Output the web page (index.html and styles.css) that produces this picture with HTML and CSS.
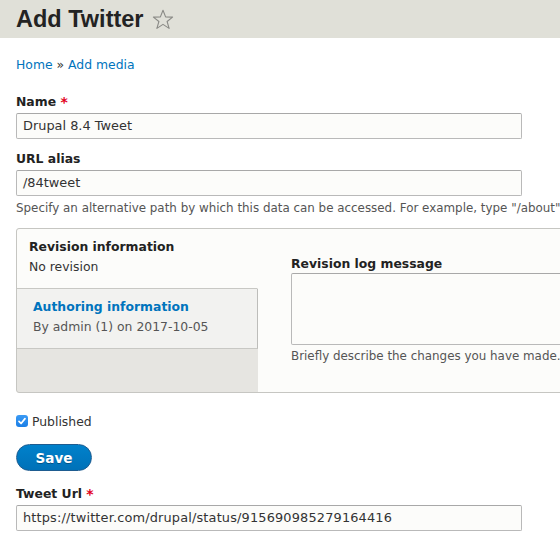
FILE: index.html
```html
<!DOCTYPE html>
<html lang="en">
<head>
<meta charset="utf-8">
<title>Add Twitter</title>
<link rel="stylesheet" href="styles.css">
</head>
<body>
<header class="page-header">
  <h1 class="page-title">Add Twitter</h1>
  <svg class="star" width="22" height="21" viewBox="0 0 22 21" aria-hidden="true">
    <path d="M11 1.2 L13.6 7.9 L20.6 8.1 L15.1 12.5 L17.1 19.4 L11 15.4 L4.9 19.4 L6.9 12.5 L1.4 8.1 L8.4 7.9 Z" fill="none" stroke="#8a8a86" stroke-width="1.1" stroke-linejoin="round"/>
  </svg>
</header>
<main class="content">
  <nav class="breadcrumb"><a href="#">Home</a> » <a href="#">Add media</a></nav>

  <div class="field first">
    <label class="label">Name <span class="req">*</span></label>
    <div class="input">Drupal 8.4 Tweet</div>
  </div>

  <div class="field">
    <label class="label">URL alias</label>
    <div class="input">/84tweet</div>
    <div class="desc nowrap">Specify an alternative path by which this data can be accessed. For example, type "/about"</div>
  </div>

  <div class="vtabs">
    <ul class="vtabs-menu">
      <li class="vtab selected">
        <strong class="vtab-title">Revision information</strong>
        <span class="vtab-summary">No revision</span>
      </li>
      <li class="vtab">
        <a href="#" class="vtab-title link">Authoring information</a>
        <span class="vtab-summary muted">By admin (1) on 2017-10-05</span>
      </li>
    </ul>
    <div class="vtabs-pane">
      <label class="label">Revision log message</label>
      <div class="textarea"></div>
      <div class="desc nowrap">Briefly describe the changes you have made.</div>
    </div>
  </div>

  <div class="check-row">
    <span class="checkbox">
      <svg width="12" height="12" viewBox="0 0 12 12" aria-hidden="true"><path d="M3 6.3 L5.1 8.5 L9 3.6" fill="none" stroke="#fff" stroke-width="1.7" stroke-linecap="round" stroke-linejoin="round"/></svg>
    </span>
    <span class="check-label">Published</span>
  </div>

  <button class="button">Save</button>

  <div class="field tweet">
    <label class="label">Tweet Url <span class="req">*</span></label>
    <div class="input url">https://twitter.com/drupal/status/915690985279164416</div>
  </div>
</main>
</body>
</html>
```

FILE: styles.css
```css
html { overflow: hidden; }
body {
  margin: 0;
  background: #fff;
  font-family: "DejaVu Sans", "Lucida Grande", sans-serif;
  font-size: 12.4px;
  color: #333;
}
a { color: #0074bd; text-decoration: none; }

.page-header {
  height: 38px;
  background: #e0e0d8;
  display: flex;
  align-items: center;
  padding-left: 16px;
  gap: 8px;
}
.page-title {
  margin: 0;
  font-family: "Liberation Sans", Arial, sans-serif;
  font-weight: bold;
  font-size: 23.5px;
  color: #232323;
  line-height: 38px;
}
.star { margin-top: 1px; }

.content { padding: 0 16px; }

.breadcrumb {
  margin-top: 18px;
  line-height: 18px;
}

.field.first { margin-top: 19px; }
.field { margin-top: 11px; }
.label {
  display: block;
  font-weight: bold;
  color: #222;
  line-height: 18px;
}
.req { color: #e2001b; font-size: 14px; vertical-align: top; }

.input {
  margin-top: 2px;
  width: 506px;
  height: 26px;
  box-sizing: border-box;
  border: 1px solid #b9b9b9;
  border-top-color: #a8a8a8;
  border-radius: 2px;
  background: #fcfcfa;
  padding: 0 6px;
  line-height: 24px;
  font-size: 12.9px;
  color: #333;
  white-space: nowrap;
}
.input.url { letter-spacing: 0.16px; }

.desc {
  margin-top: 4px;
  line-height: 16px;
  color: #555;
  font-size: 11.9px;
}
.nowrap { white-space: nowrap; }

.vtabs {
  margin-top: 12px;
  width: 720px;
  height: 163px;
  display: flex;
  border: 1px solid #c6c6c2;
  border-radius: 3px;
  background: #e6e5e1;
  box-sizing: content-box;
}
.vtabs-menu {
  list-style: none;
  margin: 0;
  padding: 0;
  width: 241px;
  flex: none;
}
.vtab {
  display: flex;
  flex-direction: column;
  height: 60px;
  box-sizing: border-box;
  border-bottom: 1px solid #c8c8c4;
  border-right: 1px solid #bdbdba;
  background: #f2f2f0;
  padding: 8px 16px 0;
  line-height: 20px;
}
.vtab.selected {
  background: #fcfcfa;
  border-right-color: #fcfcfa;
  padding: 8px 12px 0;
  border-top-left-radius: 3px;
}
.vtab-title { font-weight: bold; color: #222; }
.vtab-title.link { color: #0074bd; }
.vtab-summary { color: #333; }
.vtab-summary.muted { color: #555; }

.vtabs-pane {
  flex: 1;
  background: #fcfcfa;
  padding: 26px 0 0 33px;
}
.textarea {
  width: 400px;
  height: 72px;
  box-sizing: border-box;
  border: 1px solid #b9b9b9;
  border-top-color: #a8a8a8;
  border-radius: 2px;
  background: #fcfcfa;
}
.vtabs-pane .desc { margin-top: 3px; }

.check-row {
  margin-top: 20px;
  display: flex;
  align-items: center;
  gap: 4px;
  height: 16px;
}
.checkbox {
  width: 12px;
  height: 12px;
  border-radius: 3px;
  background: linear-gradient(#3a9af4, #1b7fe6);
  display: flex;
  align-items: center;
  justify-content: center;
}
.check-label { color: #333; }

.button {
  display: block;
  margin-top: 15px;
  width: 76px;
  height: 27px;
  border-radius: 14px;
  border: 1px solid #1e5c90;
  background: linear-gradient(#0081cb, #0071b8);
  color: #fff;
  font-family: "DejaVu Sans", sans-serif;
  font-weight: bold;
  font-size: 13.5px;
  padding: 0;
  text-shadow: 0 1px 0 rgba(0,0,0,0.3);
}

.field.tweet { margin-top: 14px; }
```
